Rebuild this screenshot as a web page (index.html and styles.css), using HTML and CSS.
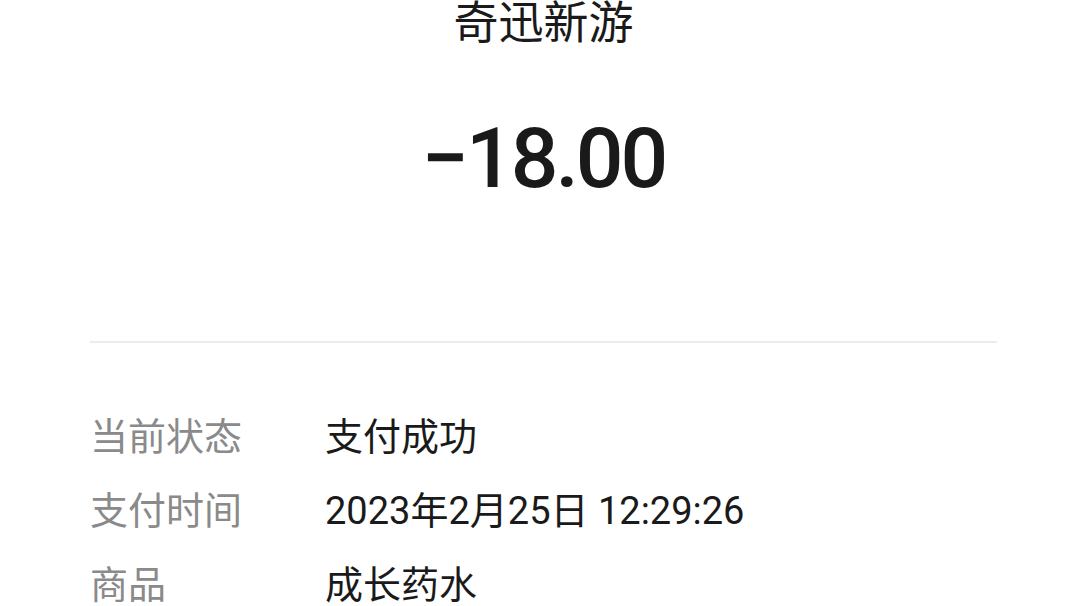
FILE: index.html
```html
<!DOCTYPE html>
<html lang="zh-CN">
<head>
  <meta charset="UTF-8">
  <title>账单详情</title>
  <meta name="viewport" content="width=device-width, initial-scale=1.0">
  <link rel="stylesheet" href="styles.css">
</head>
<body>

  <!-- 商户 + 金额 -->
  <header class="bill-head">
    <div class="merchant">奇迅新游</div>
    <div class="amount">&minus;18.00</div>
  </header>

  <!-- 明细 -->
  <section class="bill-detail">
    <div class="row">
      <span class="label">当前状态</span>
      <span class="value">支付成功</span>
    </div>
    <div class="row">
      <span class="label">支付时间</span>
      <span class="value">2023年2月25日 12:29:26</span>
    </div>
    <div class="row">
      <span class="label">商品</span>
      <span class="value">成长药水</span>
    </div>
  </section>

</body>
</html>
```

FILE: styles.css
```css
body {
  margin: 0;
  background: #fff;
  color: #1a1a1a;
  font-family: Roboto, "Noto Sans CJK SC", sans-serif;
  overflow: hidden;
}

.bill-head {
  display: flex;
  flex-direction: column;
  align-items: center;
  margin: 0 83px 0 90px;
  padding-bottom: 132px;
  border-bottom: 2px solid #ececec;
}

.merchant {
  font-size: 45px;
  line-height: 48px;
}

.amount {
  font-size: 84px;
  font-weight: 500;
  line-height: 100px;
  margin-top: 61px;
  letter-spacing: -3px;
}

.bill-detail {
  padding: 53px 0 0 90px;
}

.row {
  display: flex;
  align-items: center;
  height: 74px;
  font-size: 38px;
}

.label {
  width: 235px;
  color: #8a8a8a;
}

.value {
  color: #1a1a1a;
}
```
